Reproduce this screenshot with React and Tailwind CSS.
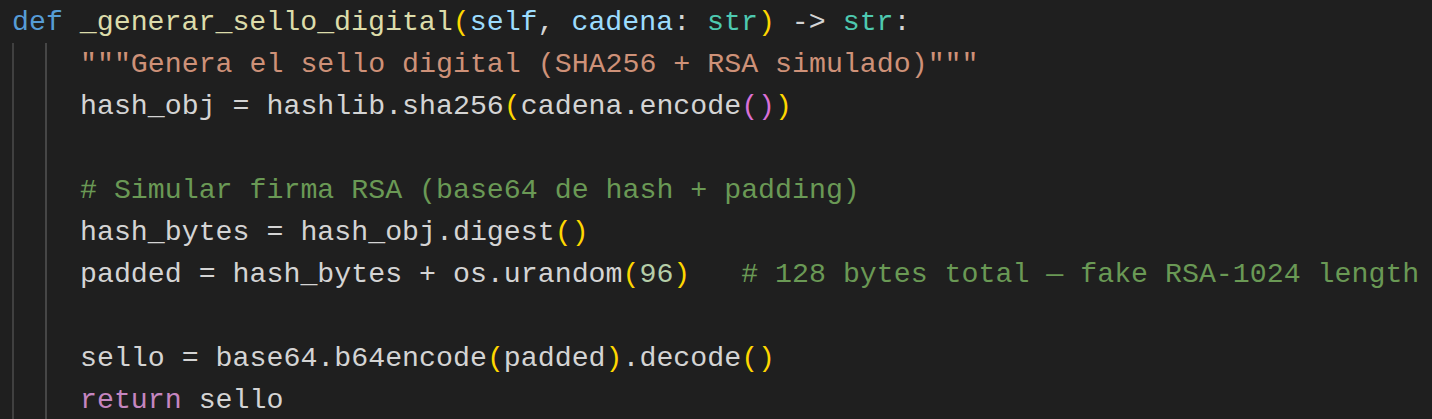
import React from 'react';

// Dark+ style token colours
const c = {
  kw: 'text-[#569cd6]',
  fn: 'text-[#dcdcaa]',
  param: 'text-[#9cdcfe]',
  type: 'text-[#4ec9b0]',
  str: 'text-[#ce9178]',
  com: 'text-[#6a9955]',
  ret: 'text-[#c586c0]',
  num: 'text-[#b5cea8]',
  b1: 'text-[#ffd700]',
  b2: 'text-[#da70d6]',
};

function Line({ children }) {
  return <div className="h-[42px] whitespace-pre">{children || ' '}</div>;
}

export default function App() {
  return (
    <div
      className="w-[1432px] h-[419px] overflow-hidden bg-[#1f1f1f] text-[#d4d4d4] text-[28.25px] leading-[42px] pl-[12px] pt-px"
      style={{ fontFamily: '"Liberation Mono", "DejaVu Sans Mono", monospace' }}
    >
      <Line>
        <span className={c.kw}>def</span> <span className={c.fn}>_generar_sello_digital</span>
        <span className={c.b1}>(</span>
        <span className={c.param}>self</span>, <span className={c.param}>cadena</span>: <span className={c.type}>str</span>
        <span className={c.b1}>)</span> -&gt; <span className={c.type}>str</span>:
      </Line>
      <div className="border-l-2 border-[#404040]">
        <div className="ml-[31px] border-l-2 border-[#464646] pl-[33px]">
          <Line>
            <span className={c.str}>"""Genera el sello digital (SHA256 + RSA simulado)"""</span>
          </Line>
          <Line>
            hash_obj = hashlib.sha256<span className={c.b1}>(</span>cadena.encode
            <span className={c.b2}>()</span>
            <span className={c.b1}>)</span>
          </Line>
          <Line />
          <Line>
            <span className={c.com}># Simular firma RSA (base64 de hash + padding)</span>
          </Line>
          <Line>
            hash_bytes = hash_obj.digest<span className={c.b1}>()</span>
          </Line>
          <Line>
            padded = hash_bytes + os.urandom<span className={c.b1}>(</span>
            <span className={c.num}>96</span>
            <span className={c.b1}>)</span>
            {'   '}
            <span className={c.com}># 128 bytes total — fake RSA-1024 length</span>
          </Line>
          <Line />
          <Line>
            sello = base64.b64encode<span className={c.b1}>(</span>padded<span className={c.b1}>)</span>.decode
            <span className={c.b1}>()</span>
          </Line>
          <Line>
            <span className={c.ret}>return</span> sello
          </Line>
        </div>
      </div>
    </div>
  );
}
